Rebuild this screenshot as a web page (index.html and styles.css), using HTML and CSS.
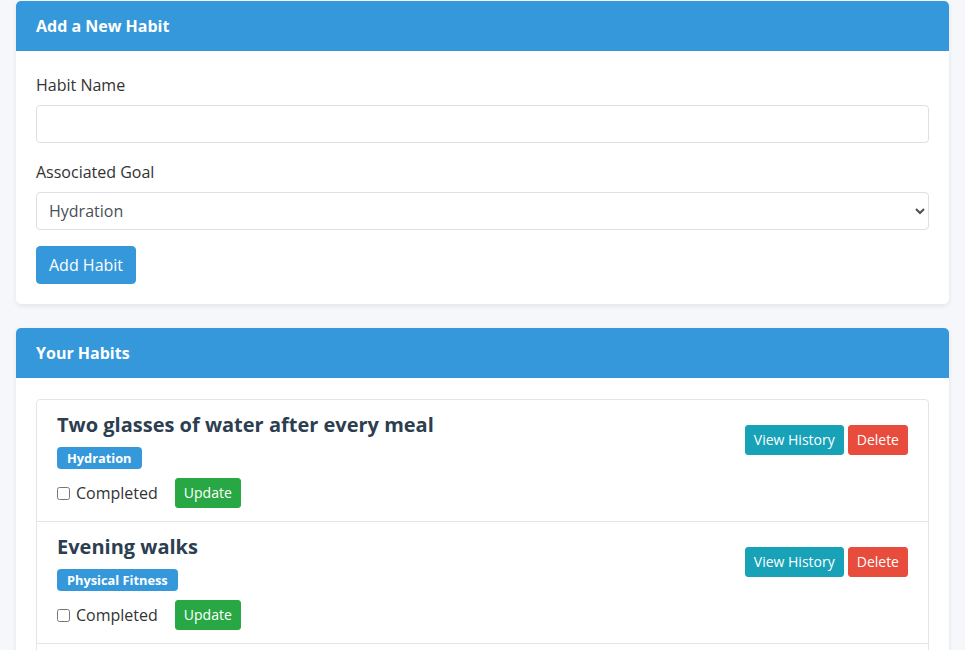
FILE: index.html
```html
<!DOCTYPE html>
<html lang="en">
<head>
<meta charset="utf-8">
<title>Habits</title>
<link rel="stylesheet" href="styles.css">
</head>
<body>
<div class="container">
  <section class="card">
    <div class="card-header">Add a New Habit</div>
    <div class="card-body form-body">
      <div class="form-group">
        <label class="form-label" for="habitName">Habit Name</label>
        <input class="form-control" id="habitName" type="text">
      </div>
      <div class="form-group">
        <label class="form-label" for="goal">Associated Goal</label>
        <select class="form-control form-select" id="goal">
          <option>Hydration</option>
          <option>Physical Fitness</option>
        </select>
      </div>
      <button class="btn btn-primary" type="button">Add Habit</button>
    </div>
  </section>

  <section class="card">
    <div class="card-header">Your Habits</div>
    <div class="card-body list-body">
      <ul class="list-group">
        <li class="list-item">
          <div class="item-main">
            <h5 class="item-title">Two glasses of water after every meal</h5>
            <span class="badge">Hydration</span>
            <div class="item-row">
              <label class="check"><input type="checkbox"> Completed</label>
              <button class="btn btn-sm btn-success" type="button">Update</button>
            </div>
          </div>
          <div class="item-actions">
            <button class="btn btn-sm btn-info" type="button">View History</button>
            <button class="btn btn-sm btn-danger" type="button">Delete</button>
          </div>
        </li>
        <li class="list-item">
          <div class="item-main">
            <h5 class="item-title">Evening walks</h5>
            <span class="badge">Physical Fitness</span>
            <div class="item-row">
              <label class="check"><input type="checkbox"> Completed</label>
              <button class="btn btn-sm btn-success" type="button">Update</button>
            </div>
          </div>
          <div class="item-actions">
            <button class="btn btn-sm btn-info" type="button">View History</button>
            <button class="btn btn-sm btn-danger" type="button">Delete</button>
          </div>
        </li>
        <li class="list-item">
          <div class="item-main">
            <h5 class="item-title">Morning stretches</h5>
            <span class="badge">Physical Fitness</span>
            <div class="item-row">
              <label class="check"><input type="checkbox"> Completed</label>
              <button class="btn btn-sm btn-success" type="button">Update</button>
            </div>
          </div>
          <div class="item-actions">
            <button class="btn btn-sm btn-info" type="button">View History</button>
            <button class="btn btn-sm btn-danger" type="button">Delete</button>
          </div>
        </li>
      </ul>
    </div>
  </section>
</div>
</body>
</html>
```

FILE: styles.css
```css
* { box-sizing: border-box; }

html, body {
  margin: 0;
  padding: 0;
}

body {
  background: #f5f7fa;
  font-family: "Open Sans", "Noto Sans", sans-serif;
  font-size: 16px;
  line-height: 1.5;
  color: #333;
}

.container {
  padding: 1px 16px 40px;
  display: flex;
  flex-direction: column;
  gap: 24px;
}

.card {
  background: #fff;
  border-radius: 5px;
  box-shadow: 0 2px 5px rgba(0, 0, 0, 0.08);
  overflow: hidden;
}

.card-header {
  background: #3498db;
  color: #fff;
  font-weight: 700;
  font-size: 16px;
  line-height: 24px;
  padding: 13px 20px;
}

.card-body {
  padding: 20px;
}

.form-body {
  padding: 22px 20px 20px;
}

.list-body {
  padding: 21px 20px 20px;
}

.form-group {
  margin-bottom: 16px;
}

.form-group:first-child {
  margin-bottom: 17px;
}

.form-label {
  display: block;
  margin-bottom: 8px;
  line-height: 24px;
  color: #333;
}

.form-control {
  display: block;
  width: 100%;
  height: 38px;
  padding: 6px 12px;
  font-family: inherit;
  font-size: 16px;
  line-height: 1.5;
  color: #495057;
  background: #fff;
  border: 1px solid #dcdfe3;
  border-radius: 4px;
}

.form-select {
  padding-left: 8px;
}

.btn {
  display: inline-block;
  font-family: inherit;
  font-size: 16px;
  line-height: 24px;
  padding: 6px 12px;
  border: 1px solid transparent;
  border-radius: 4px;
  color: #fff;
  cursor: pointer;
}

.btn-primary { background: #3498db; border-color: #3498db; }
.btn-success { background: #28a745; border-color: #28a745; }
.btn-info { background: #17a2b8; border-color: #17a2b8; }
.btn-danger { background: #e74c3c; border-color: #e74c3c; }

.btn-sm {
  font-size: 14px;
  line-height: 20px;
  padding: 4px 8px;
  border-radius: 3px;
}

.list-group {
  list-style: none;
  margin: 0;
  padding: 0;
  border: 1px solid #e3e5e8;
  border-radius: 4px;
}

.list-item {
  display: flex;
  justify-content: space-between;
  align-items: flex-start;
  padding: 13px 20px 13px;
  border-bottom: 1px solid #e3e5e8;
}

.item-main {
  display: flex;
  flex-direction: column;
  align-items: flex-start;
}

.item-title {
  margin: 0 0 10px;
  font-size: 20px;
  line-height: 24px;
  font-weight: 700;
  color: #2c3e50;
}

.badge {
  display: inline-block;
  background: #3498db;
  color: #fff;
  font-size: 12.8px;
  font-weight: 700;
  line-height: 22px;
  height: 22px;
  padding: 0 10px;
  border-radius: 4px;
}

.item-row {
  display: flex;
  align-items: center;
  gap: 17px;
  margin-top: 9px;
}

.check {
  display: flex;
  align-items: center;
  gap: 6px;
  font-size: 16px;
  color: #333;
}

.check input {
  margin: 0;
  width: 13px;
  height: 13px;
}

.item-actions {
  display: flex;
  gap: 4px;
  margin-top: 12px;
}
```
